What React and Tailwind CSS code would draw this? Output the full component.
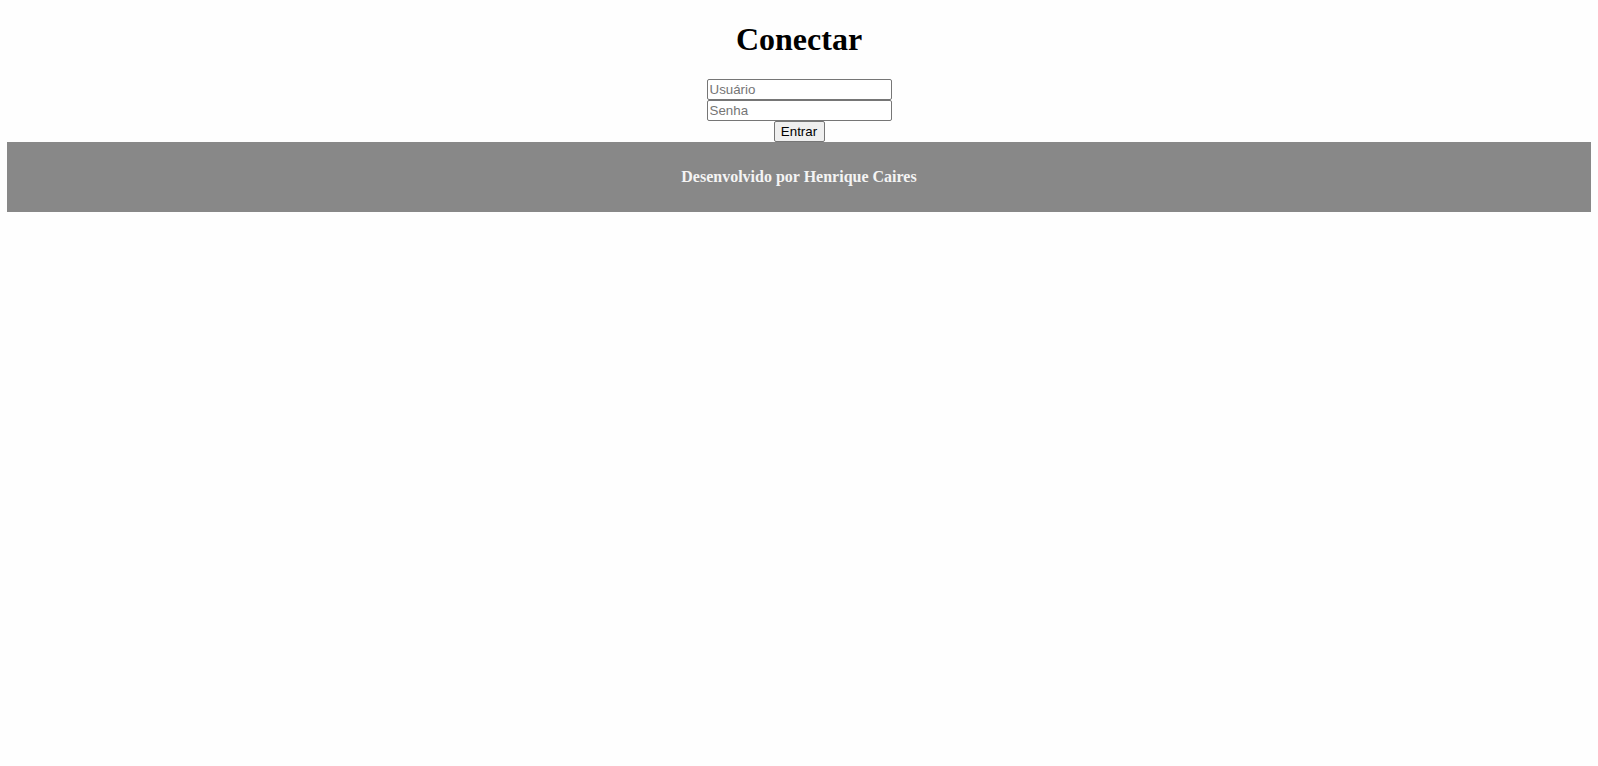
import React from 'react';

const App = () => {
    return (
        <div className="min-h-screen bg-[#fefefe] pt-[21px]" style={{ fontFamily: '"Liberation Serif", serif' }}>
            <h1 className="text-center text-[32px] font-bold leading-[37px] text-black mb-[21px]">
                Conectar
            </h1>
            <form className="flex flex-col items-center" onSubmit={(e) => e.preventDefault()}>
                <input
                    type="text"
                    placeholder="Usuário"
                    className="w-[185px] h-[21px] px-[2px] border border-[#767676] rounded-[2px] bg-white text-[13.33px] text-black placeholder:text-[#757575] font-['Liberation_Sans',sans-serif] outline-none"
                />
                <input
                    type="password"
                    placeholder="Senha"
                    className="w-[185px] h-[21px] px-[2px] border border-[#767676] rounded-[2px] bg-white text-[13.33px] text-black placeholder:text-[#757575] font-['Liberation_Sans',sans-serif] outline-none"
                />
                <button
                    type="submit"
                    className="w-[51px] h-[21px] border border-[#767676] rounded-[2px] bg-[#efefef] text-[13.33px] text-black font-['Liberation_Sans',sans-serif] leading-none"
                >
                    Entrar
                </button>
            </form>
            <footer className="mx-[7px] h-[70px] bg-[#888888] flex items-center justify-center">
                <h4 className="text-[16px] font-bold text-[#f4f4f4]">
                    Desenvolvido por Henrique Caires
                </h4>
            </footer>
        </div>
    );
};

export default App;
